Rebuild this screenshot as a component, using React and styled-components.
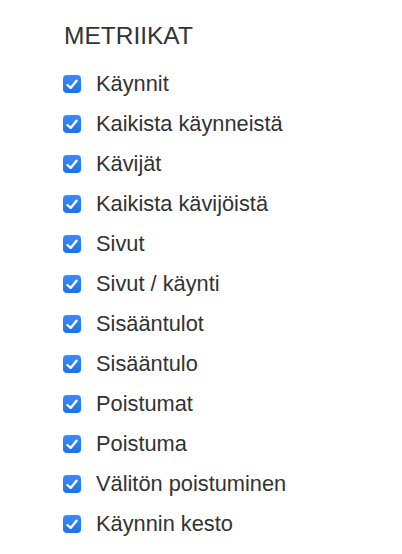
import React from "react";
import styled, { createGlobalStyle } from "styled-components";

const Global = createGlobalStyle`
  html, body { margin: 0; padding: 0; background: #fff; }
  body { font-family: "Liberation Sans", Arial, sans-serif; }
`;

const Panel = styled.section`
  padding: 20px 0 0 63px;
  width: 402px;
  height: 554px;
  box-sizing: border-box;
`;

const Title = styled.h2`
  margin: 0 0 12px 1px;
  font-family: "Liberation Sans", Arial, sans-serif;
  font-weight: 400;
  font-size: 24.5px;
  line-height: 32px;
  color: #333;
`;

const List = styled.ul`
  list-style: none;
  margin: 0;
  padding: 0;
  display: flex;
  flex-direction: column;
`;

const Item = styled.li`
  display: flex;
  align-items: center;
  gap: 15px;
  height: 40px;
`;

const Box = styled.span`
  width: 18px;
  height: 18px;
  border-radius: 4px;
  background: linear-gradient(#3a8cf7, #1c72ee);
  display: flex;
  align-items: center;
  justify-content: center;
  flex: none;
`;

const Label = styled.span`
  font-family: "Liberation Sans", Arial, sans-serif;
  font-size: 21.8px;
  color: #333;
  line-height: 1;
`;

const items = [
  "Käynnit",
  "Kaikista käynneistä",
  "Kävijät",
  "Kaikista kävijöistä",
  "Sivut",
  "Sivut / käynti",
  "Sisääntulot",
  "Sisääntulo",
  "Poistumat",
  "Poistuma",
  "Välitön poistuminen",
  "Käynnin kesto",
];

const Check = () => (
  <svg width="12" height="11" viewBox="0 0 12 11">
    <path d="M1.5 6 L4.6 9 L10.5 1.8" fill="none" stroke="#fff" strokeWidth="2.4" strokeLinecap="round" strokeLinejoin="round" />
  </svg>
);

export default function App() {
  return (
    <>
      <Global />
      <Panel>
        <Title>METRIIKAT</Title>
        <List>
          {items.map((t) => (
            <Item key={t}>
              <Box><Check /></Box>
              <Label>{t}</Label>
            </Item>
          ))}
        </List>
      </Panel>
    </>
  );
}
